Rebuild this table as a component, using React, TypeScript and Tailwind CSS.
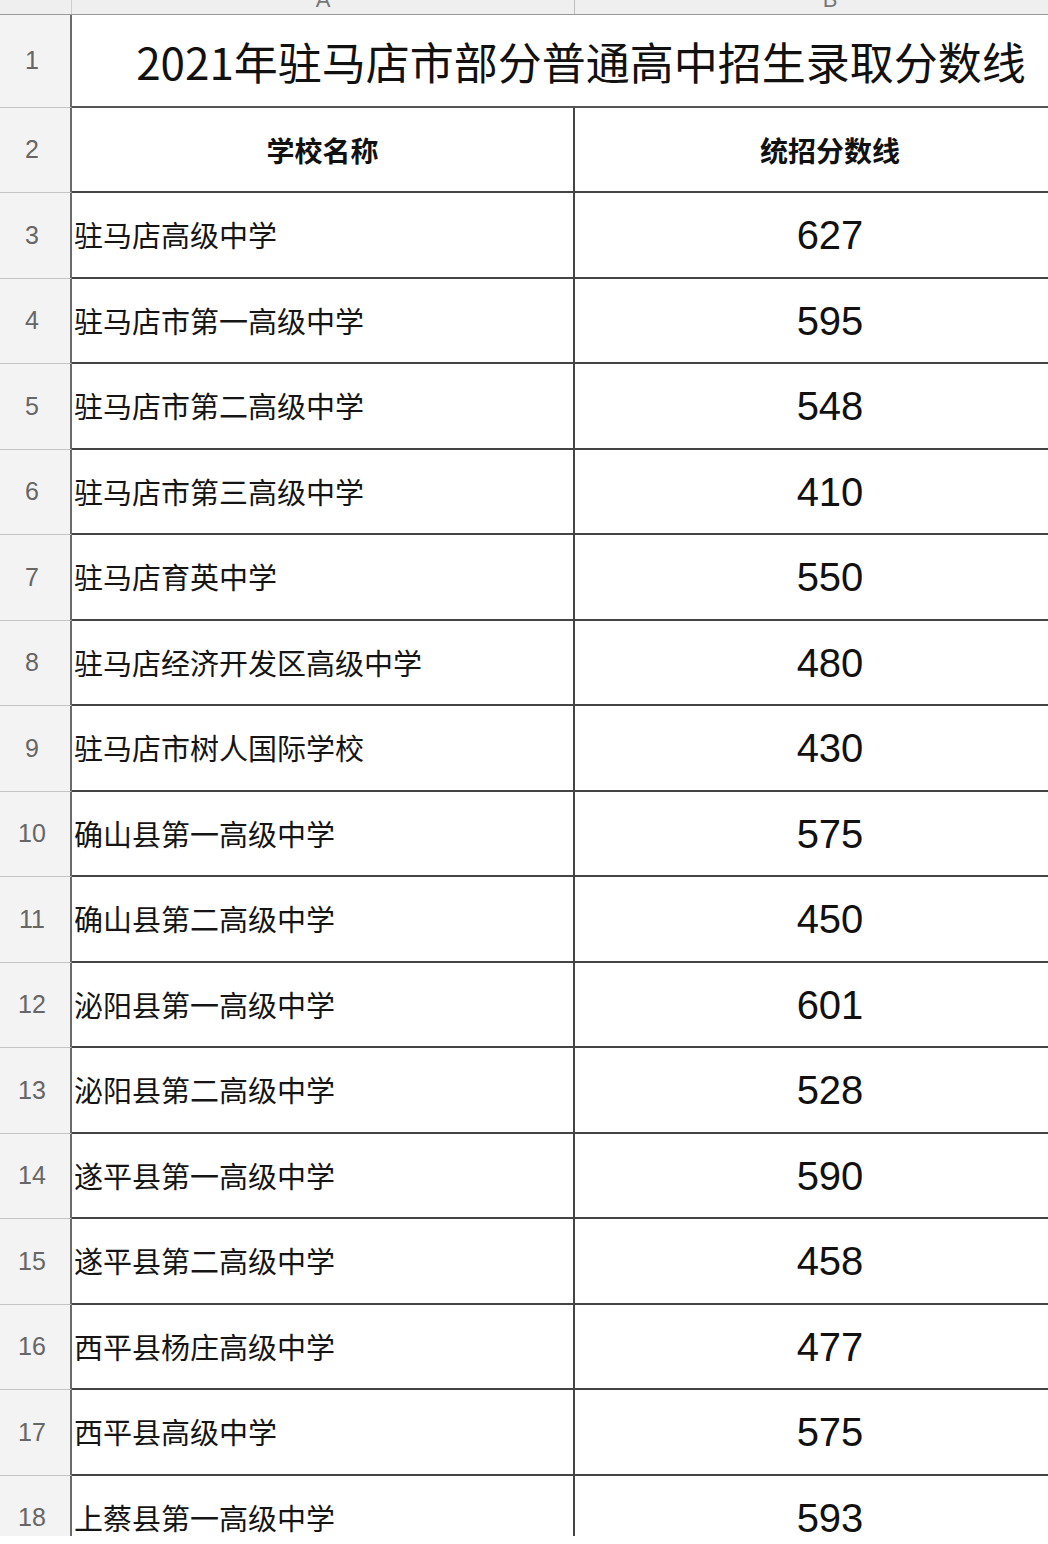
import React from "react";

const schools: [string, string][] = [
  ["驻马店高级中学", "627"],
  ["驻马店市第一高级中学", "595"],
  ["驻马店市第二高级中学", "548"],
  ["驻马店市第三高级中学", "410"],
  ["驻马店育英中学", "550"],
  ["驻马店经济开发区高级中学", "480"],
  ["驻马店市树人国际学校", "430"],
  ["确山县第一高级中学", "575"],
  ["确山县第二高级中学", "450"],
  ["泌阳县第一高级中学", "601"],
  ["泌阳县第二高级中学", "528"],
  ["遂平县第一高级中学", "590"],
  ["遂平县第二高级中学", "458"],
  ["西平县杨庄高级中学", "477"],
  ["西平县高级中学", "575"],
  ["上蔡县第一高级中学", "593"],
];

const cjk = { fontFamily: '"Noto Sans CJK SC", "Liberation Sans", sans-serif' };
const num = { fontFamily: '"Liberation Sans", "Noto Sans CJK SC", sans-serif' };

function RowNum({ n }: { n: number }) {
  return (
    <div
      className="w-[72px] shrink-0 flex items-center justify-center pr-[6px] bg-[#f3f3f3] border-r-2 border-r-[#6b6b6b] border-b border-b-[#c4c4c4] text-[25px] text-[#666]"
      style={num}
    >
      {n}
    </div>
  );
}

export default function App() {
  return (
    <div className="w-[1048px] h-[1544px] bg-white overflow-hidden">
      <div className="h-[1536px] overflow-hidden">
        <div className="w-[1090px]">
          {/* column letters, mostly cut off */}
          <div className="flex h-[15px] bg-[#efefef] border-b border-b-[#9a9a9a] overflow-hidden text-[22px] text-[#777]" style={num}>
            <div className="w-[72px] shrink-0 border-r border-r-[#cfcfcf]" />
            <div className="w-[503px] shrink-0 flex justify-center border-r border-r-[#bdbdbd]">
              <span className="-mt-[11px] leading-none">A</span>
            </div>
            <div className="w-[510px] shrink-0 flex justify-center">
              <span className="-mt-[11px] leading-none">B</span>
            </div>
          </div>

          {/* row 1: title, merged across A and B */}
          <div className="flex h-[93px]">
            <RowNum n={1} />
            <div
              className="flex-1 flex items-center justify-center border-b-2 border-b-[#555] text-[44px] text-[#111]"
              style={cjk}
            >
              2021年驻马店市部分普通高中招生录取分数线
            </div>
          </div>

          {/* row 2: column headings */}
          <div className="flex h-[85px]">
            <RowNum n={2} />
            <div
              className="w-[503px] shrink-0 flex items-center justify-center border-r-2 border-r-[#444] border-b-2 border-b-[#444] text-[28px] font-bold text-[#111]"
              style={cjk}
            >
              学校名称
            </div>
            <div
              className="w-[510px] shrink-0 flex items-center justify-center border-b-2 border-b-[#444] text-[28px] font-bold text-[#111]"
              style={cjk}
            >
              统招分数线
            </div>
          </div>

          {schools.map(([name, score], i) => (
            <div key={i} className={i % 2 === 0 ? "flex h-[86px]" : "flex h-[85px]"}>
              <RowNum n={i + 3} />
              <div
                className="w-[503px] shrink-0 flex items-center pl-[2px] border-r-2 border-r-[#444] border-b-2 border-b-[#444] text-[29px] text-[#151515]"
                style={cjk}
              >
                {name}
              </div>
              <div
                className="w-[510px] shrink-0 flex items-center justify-center border-b-2 border-b-[#444] text-[40px] text-[#111]"
                style={num}
              >
                {score}
              </div>
            </div>
          ))}
        </div>
      </div>
    </div>
  );
}
